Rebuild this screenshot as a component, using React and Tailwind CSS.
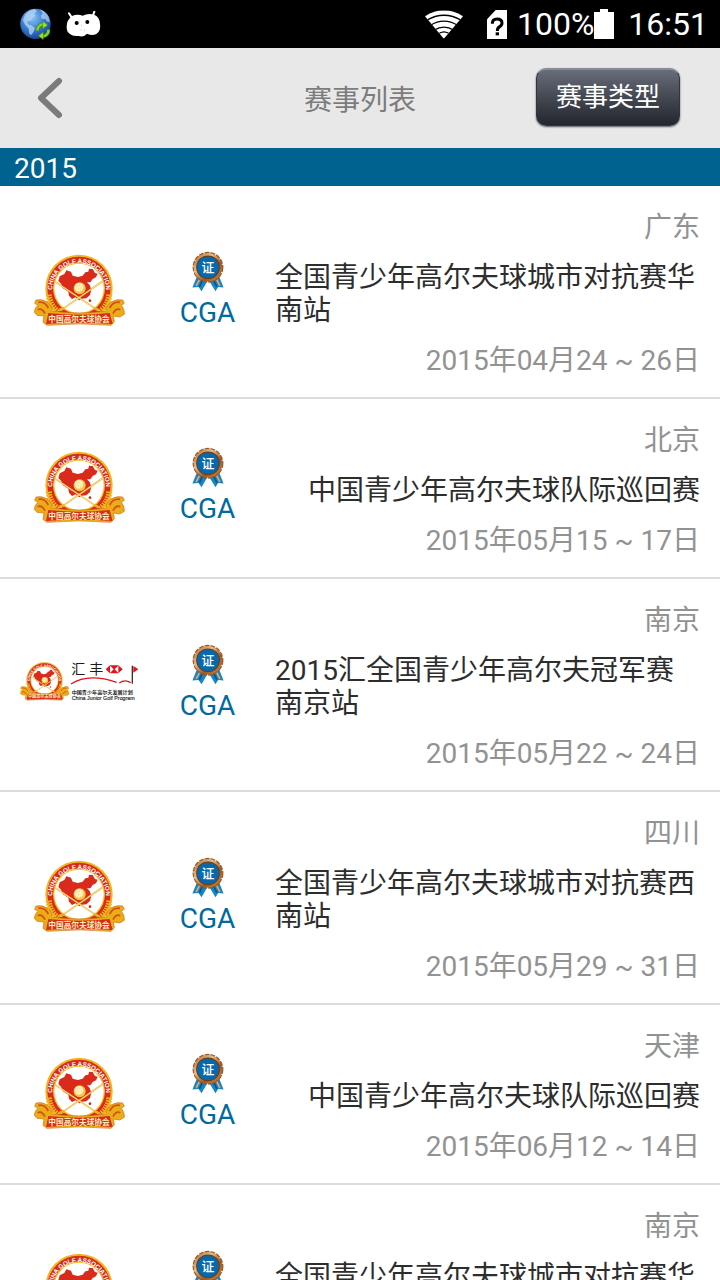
import React from "react";

const EVENTS = [
  { place: "广东", title: "全国青少年高尔夫球城市对抗赛华南站", date: "2015年04月24 ~ 26日", logo: "cga" },
  { place: "北京", title: "中国青少年高尔夫球队际巡回赛", date: "2015年05月15 ~ 17日", logo: "cga" },
  { place: "南京", title: "2015汇全国青少年高尔夫冠军赛南京站", date: "2015年05月22 ~ 24日", logo: "junior" },
  { place: "四川", title: "全国青少年高尔夫球城市对抗赛西南站", date: "2015年05月29 ~ 31日", logo: "cga" },
  { place: "天津", title: "中国青少年高尔夫球队际巡回赛", date: "2015年06月12 ~ 14日", logo: "cga" },
  { place: "南京", title: "全国青少年高尔夫球城市对抗赛华东站", date: "2015年06月19 ~ 21日", logo: "cga" },
];

function GlobeIcon() {
  return (
    <svg viewBox="0 0 99 99" className="size-8" aria-hidden="true">
      <defs>
        <radialGradient id="globe" cx="0.4" cy="0.3" r="0.75">
          <stop offset="0" stopColor="#8fc4f5" />
          <stop offset="0.5" stopColor="#3a80d2" />
          <stop offset="1" stopColor="#123f94" />
        </radialGradient>
      </defs>
      <circle cx="48" cy="49" r="47" fill="url(#globe)" />
      <path d="M16 20Q28 6 46 3L52 11 44 18 48 24 38 31 32 40 22 42 26 50 36 54 46 62 42 74 34 84 28 78 27 64 16 52 9 38Z" fill="#b9d6f2" opacity="0.75" />
      <path d="M62 5Q78 10 88 26L92 44 84 42 78 34 68 34 64 24 70 18Z" fill="#b9d6f2" opacity="0.7" />
      <g fill="none" stroke="#2f7a12" strokeWidth="11">
        <path d="M54 70A18 18 0 0 1 75 51M88 67A18 18 0 0 1 67 87" />
      </g>
      <g fill="none" stroke="#86cf22" strokeWidth="8">
        <path d="M54 70A18 18 0 0 1 75 51M88 67A18 18 0 0 1 67 87" />
      </g>
      <path d="M70 40L86 53 70 64ZM72 74V98L57 86Z" fill="#9be02c" stroke="#2f7a12" strokeWidth="1.5" />
    </svg>
  );
}

function RobotIcon() {
  return (
    <svg viewBox="0 0 105 78" className="h-[26px] w-[35px]" aria-hidden="true">
      <g fill="#fff">
        <path d="M18 15Q34 8 50 14Q66 6 84 11Q101 17 102 39Q105 60 91 69Q78 76 63 68Q52 80 38 75Q13 77 4 61Q-4 32 18 15Z" />
        <path d="M9 7L19 22M85 2L80 16" stroke="#fff" strokeWidth="6" strokeLinecap="round" />
      </g>
      <circle cx="32" cy="36" r="6" />
      <circle cx="64" cy="33" r="6" />
      <path d="M45 43h2M44 57h2M54 57h2" stroke="#999" strokeWidth="3" />
    </svg>
  );
}

function WifiIcon() {
  return (
    <svg viewBox="0 0 115 86" className="h-[29px] w-[38px]" aria-hidden="true">
      <defs>
        <clipPath id="fan">
          <path d="M0 18Q57 -18 115 18L57 86Z" />
        </clipPath>
      </defs>
      <g clipPath="url(#fan)">
        <rect width="115" height="86" fill="#fff" />
        <path d="M4 31Q57 -1 111 31M16 46Q57 20 99 46M28 60Q57 42 87 60M38 73Q57 58 77 73" fill="none" stroke="#000" strokeWidth="4" />
      </g>
    </svg>
  );
}

function SimIcon() {
  return (
    <svg viewBox="0 0 60 87" className="h-[29px] w-5" aria-hidden="true">
      <path d="M26 0H60V87H0V28Z" fill="#fff" />
      <path d="M16 41Q16 27 30 27Q45 27 45 39Q45 46 38 50Q31 54 31 63" fill="none" stroke="#000" strokeWidth="9" />
      <rect x="26" y="67" width="10" height="9" />
    </svg>
  );
}

function BatteryIcon() {
  return (
    <svg viewBox="0 0 20 30" className="h-[30px] w-5" aria-hidden="true">
      <path d="M6 0h8v3h6v27H0V3h6Z" fill="#fff" />
    </svg>
  );
}

function EmblemArt({ id }) {
  return (
    <g>
      <defs>
        <path id={id} d="M80 144A81 81 0 1 1 240 144" />
      </defs>
      <circle cx="160" cy="126" r="101" fill="#f0b61c" />
      <circle cx="160" cy="126" r="95" fill="#d92a1c" />
      <circle cx="160" cy="126" r="78" fill="#f3bd25" />
      <circle cx="160" cy="126" r="74" fill="#fff" />
      <path d="M69 145Q72 175 96 196M251 145Q248 175 224 196" fill="none" stroke="#f0b61c" strokeWidth="18" strokeDasharray="5 3" />
      <text fontSize="19" fontWeight="700" fill="#fff" className="font-['Liberation_Sans',sans-serif]">
        <textPath href={"#" + id} startOffset="50%" textAnchor="middle">CHINA GOLF ASSOCIATION</textPath>
      </text>
      <path d="M102 90L116 83 122 72 136 76 141 88 157 92 171 88 179 78 188 76 190 67 201 68 208 80 216 82 211 93 201 98 194 108 184 108 192 116 197 130 193 146 182 156 169 157 161 162 150 153 139 158 130 148 128 136 112 126 106 112 98 104Z" fill="#d92a1c" />
      <circle cx="193" cy="163" r="4" fill="#d92a1c" />
      <path d="M88 106L218 193M232 104L104 193" stroke="#e8b02a" strokeWidth="5" />
      <path d="M88 106L218 193M232 104L104 193" stroke="#fff3c4" strokeWidth="2" />
      <path d="M94 196Q99 182 118 184L114 191ZM226 196Q219 182 202 184L208 191Z" fill="#e8b02a" />
      <circle cx="162" cy="126" r="18" fill="#f4c544" />
      <circle cx="160" cy="123" r="13" fill="#fff0be" />
      <path d="M154 119h1M162 117h1M158 126h1M166 125h1M163 133h1" stroke="#d99b2c" strokeWidth="3" />
      <path d="M31 161Q48 157 65 167Q84 184 78 194Q160 206 242 194Q236 184 256 167Q275 157 291 161L296 171 287 177Q297 188 296 204L282 212 263 209 266 226 256 237Q160 228 64 237L52 228 55 209 34 207 26 198Q27 184 37 177L27 171Z" fill="#e9ae16" stroke="#cf6d18" strokeWidth="2" />
      <path d="M38 168Q57 164 68 185M283 168Q263 164 252 185M36 190Q49 184 58 202M284 190Q271 184 262 202" fill="none" stroke="#d94b1b" strokeWidth="5" />
      <path d="M68 200Q160 210 252 200L261 233Q160 225 61 233Z" fill="#d92a1c" />
      <text x="160" y="226" textAnchor="middle" fontSize="23" fontWeight="700" fill="#fff0b8" className="font-['Noto_Sans_CJK_SC',sans-serif]">中国高尔夫球协会</text>
    </g>
  );
}

function CgaEmblem({ id }) {
  return (
    <svg viewBox="25 23 276 216" className="h-[72px] w-[92px] overflow-visible" role="img" aria-label="中国高尔夫球协会">
      <EmblemArt id={id} />
    </svg>
  );
}

function JuniorLogo({ id }) {
  return (
    <svg viewBox="30 60 360 126" className="mb-1 h-[42px] w-[120px] overflow-visible" role="img" aria-label="汇丰中国青少年高尔夫发展计划">
      <g transform="translate(17 53) scale(0.54)">
        <EmblemArt id={id} />
      </g>
      <g className="font-['Noto_Sans_CJK_SC',sans-serif]" fill="#1b1b1b">
        <text x="184" y="101" fontSize="42">汇</text>
        <text x="238" y="101" fontSize="42">丰</text>
        <text x="185" y="163" fontSize="15.3" fontWeight="700">中国青少年高尔夫发展计划</text>
      </g>
      <text x="185" y="180" fontSize="16" fill="#1b1b1b" stroke="#1b1b1b" strokeWidth="0.4" className="font-['Liberation_Sans',sans-serif]">China Junior Golf Program</text>
      <path d="M287 88L300 76H325L338 88 325 100H300Z" fill="#e3131b" />
      <path d="M300 77V99L311 88ZM325 77V99L314 88Z" fill="#fff" />
      <path d="M367 77V131" stroke="#333" strokeWidth="4" />
      <path d="M370 78L385 88 370 98Z" fill="#e3131b" />
      <path d="M183 132Q235 98 320 127M328 129Q344 117 362 128" fill="none" stroke="#e3131b" strokeWidth="4" />
    </svg>
  );
}

function Medal() {
  return (
    <svg viewBox="60 20 94 118" className="h-10 w-8 overflow-visible" aria-hidden="true">
      <defs>
        <linearGradient id="bronze" x1="0" y1="0" x2="1" y2="1">
          <stop offset="0" stopColor="#a5622c" />
          <stop offset="0.35" stopColor="#e9bb85" />
          <stop offset="0.65" stopColor="#a0561f" />
          <stop offset="1" stopColor="#d0904f" />
        </linearGradient>
      </defs>
      <path d="M76 88L61 125 79 123 88 136 106 104ZM138 88L153 125 137 123 129 136 110 104Z" fill="#1585c4" />
      <path d="M84 98L72 120M131 98L142 120" stroke="#e5a765" strokeWidth="5" />
      <path d="M90 104L82 122M124 104L133 122" stroke="#0a5590" strokeWidth="5" />
      <circle cx="107" cy="65" r="42" fill="none" stroke="#9c5a28" strokeWidth="7" strokeDasharray="14 3" />
      <circle cx="107" cy="65" r="42" fill="url(#bronze)" />
      <circle cx="107" cy="65" r="35" fill="#6e3b17" />
      <circle cx="107" cy="65" r="32" fill="#0668ad" />
      <text x="107" y="79" textAnchor="middle" fontSize="38" fontWeight="500" fill="#fff" className="font-['Noto_Sans_CJK_SC',sans-serif]">证</text>
    </svg>
  );
}

function EventRow({ event, index }) {
  return (
    <li className="border-b-2 border-[#dcdcdc]">
      <a href={"#event-" + index} className="flex items-center pt-[25px] pr-5 pb-5">
        <div className="flex w-40 shrink-0 justify-center pb-2">
          {event.logo === "cga" ? <CgaEmblem id={"arc-" + index} /> : <JuniorLogo id={"arc-" + index} />}
        </div>
        <div className="flex w-[95px] shrink-0 flex-col items-center gap-1 pb-2 text-[#006a9e]">
          <Medal />
          <span>CGA</span>
        </div>
        <div className="ml-5 flex min-w-0 flex-1 flex-col items-end gap-[17px] text-[#929292]">
          <p>{event.place}</p>
          <h2 className="text-[#2d2d2d]">{event.title}</h2>
          <p>{event.date}</p>
        </div>
      </a>
    </li>
  );
}

export default function App() {
  return (
    <div className="flex h-screen flex-col overflow-hidden bg-white font-[Roboto,'Noto_Sans_CJK_SC',sans-serif] text-[28px] leading-[33px]">
      <div className="flex h-12 shrink-0 items-center justify-between bg-black pr-3 pl-5 text-[32px] text-white">
        <div className="flex items-center gap-3.5">
          <GlobeIcon />
          <RobotIcon />
        </div>
        <div className="flex items-center">
          <WifiIcon />
          <span className="ml-6"><SimIcon /></span>
          <span className="ml-2.5">100%</span>
          <BatteryIcon />
          <span className="ml-3.5">16:51</span>
        </div>
      </div>

      <header className="grid h-[100px] shrink-0 grid-cols-[1fr_auto_1fr] items-center bg-[#e8e8e8]">
        <button type="button" aria-label="返回" className="ml-9 w-8 justify-self-start">
          <svg viewBox="0 0 32 42" className="h-[42px] w-8" fill="none" stroke="#7b7b7b" strokeWidth="6">
            <path d="M23 4L5 21L23 38" strokeLinecap="round" strokeLinejoin="round" />
          </svg>
        </button>
        <h1 className="pt-1 text-[#7c7c7c]">赛事列表</h1>
        <button
          type="button"
          className="mr-10 mb-0.5 h-[58px] w-36 justify-self-end rounded-[10px] border border-t-2 border-[#32353e] border-t-[#858b97] bg-linear-to-b from-[#686d79] to-[#23262e] text-[26px] text-white shadow-[0_1px_2px_#55555f]"
        >
          赛事类型
        </button>
      </header>

      <main className="flex-1 overflow-y-auto [scrollbar-width:none]">
        <h2 className="bg-[#00628e] pt-1 pb-px pl-3.5 text-white">2015</h2>
        <ul>
          {EVENTS.map((event, index) => (
            <EventRow key={index} event={event} index={index} />
          ))}
        </ul>
      </main>
    </div>
  );
}
